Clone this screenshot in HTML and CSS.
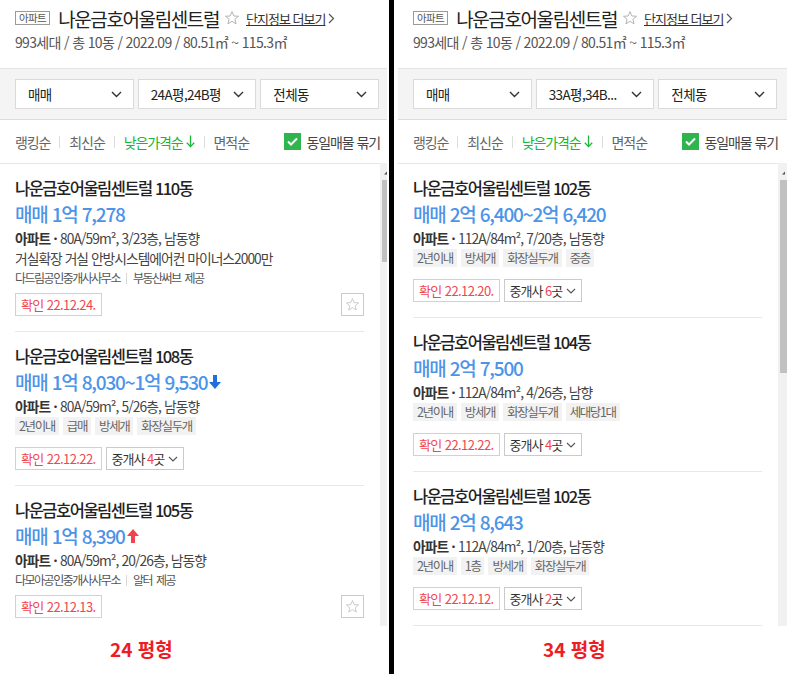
FILE: index.html
```html
<!DOCTYPE html>
<html lang="ko">
  <head>
    <meta charset="UTF-8" />
    <meta name="viewport" content="width=device-width, initial-scale=1.0" />
    <title>나운금호어울림센트럴 매물 비교</title>
    <link rel="stylesheet" href="styles.css">
  </head>

  <body>
    <div class="page">
      <div class="clip">
        <section class="panel">
          <header class="complex">
            <div class="complex-title">
              <span class="type-badge">아파트</span>
              <h1 class="complex-name">나운금호어울림센트럴</h1>
              <svg class="fav-star" width="16" height="16" viewBox="0 0 24 24"><polygon points="12,2.5 14.8,9 21.8,9.4 16.4,13.9 18.1,20.8 12,17 5.9,20.8 7.6,13.9 2.2,9.4 9.2,9" fill="none" stroke="#b5b5b5" stroke-width="1.5"/></svg>
              <a class="complex-more">단지정보 더보기<svg width="7" height="11" viewBox="0 0 7 11"><polyline points="1,1 5.5,5.5 1,10" fill="none" stroke="#555" stroke-width="1.2"/></svg></a>
            </div>
            <p class="complex-summary">993세대 / 총 10동 / 2022.09 / 80.51㎡ ~ 115.3㎡</p>
          </header>

          <div class="filters">
            <div class="select">매매<svg width="11" height="7" viewBox="0 0 11 7"><polyline points="1,1 5.5,5.5 10,1" fill="none" stroke="#333" stroke-width="1.4"/></svg></div>
            <div class="select">24A평,24B평<svg width="11" height="7" viewBox="0 0 11 7"><polyline points="1,1 5.5,5.5 10,1" fill="none" stroke="#333" stroke-width="1.4"/></svg></div>
            <div class="select">전체동<svg width="11" height="7" viewBox="0 0 11 7"><polyline points="1,1 5.5,5.5 10,1" fill="none" stroke="#333" stroke-width="1.4"/></svg></div>
          </div>

          <div class="sort-bar">
            <ul class="sort-list">
              <li>랭킹순</li>
              <li>최신순</li>
              <li class="active">낮은가격순<svg width="9" height="13" viewBox="0 0 9 13"><path d="M4.5 0.5v11M0.8 7.8l3.7 3.8 3.7-3.8" fill="none" stroke="#1db43c" stroke-width="1.3"/></svg></li>
              <li>면적순</li>
            </ul>
            <label class="group-check"><span class="checkbox"><svg width="11" height="9" viewBox="0 0 11 9"><polyline points="1,4.5 4,7.5 10,1.5" fill="none" stroke="#fff" stroke-width="2"/></svg></span>동일매물 묶기</label>
          </div>

          <div class="list-wrap">
            <div class="list">
              <article class="item">
                <h2 class="item-title">나운금호어울림센트럴 110동</h2>
                <p class="item-price">매매 1억 7,278</p>
                <p class="item-spec"><strong>아파트 · </strong>80A/59m², 3/23층, 남동향</p>
                <p class="item-desc">거실확장 거실 안방시스템에어컨 마이너스2000만</p>
                <p class="item-agent">다드림공인중개사사무소<span class="bar"></span>부동산써브 제공</p>
                <div class="badges">
                  <span class="confirm">확인 22.12.24.</span>
                  <span class="fav-btn"><svg width="15" height="15" viewBox="0 0 24 24"><polygon points="12,2.5 14.8,9 21.8,9.4 16.4,13.9 18.1,20.8 12,17 5.9,20.8 7.6,13.9 2.2,9.4 9.2,9" fill="none" stroke="#c4c4c4" stroke-width="1.4"/></svg></span>
                </div>
              </article>
              <article class="item">
                <h2 class="item-title">나운금호어울림센트럴 108동</h2>
                <p class="item-price">매매 1억 8,030~1억 9,530<svg class="trend" width="12" height="14" viewBox="0 0 12 14"><polygon points="4,0 8,0 8,7 12,7 6,14 0,7 4,7" fill="#1f6fde"/></svg></p>
                <p class="item-spec"><strong>아파트 · </strong>80A/59m², 5/26층, 남동향</p>
                <div class="tags"><span>2년이내</span><span>급매</span><span>방세개</span><span>화장실두개</span></div>
                <div class="badges">
                  <span class="confirm">확인 22.12.22.</span>
                  <span class="agents">중개사 <em>4</em>곳<svg width="10" height="6" viewBox="0 0 10 6"><polyline points="1,1 5,5 9,1" fill="none" stroke="#555" stroke-width="1.1"/></svg></span>
                </div>
              </article>
              <article class="item">
                <h2 class="item-title">나운금호어울림센트럴 105동</h2>
                <p class="item-price">매매 1억 8,390<svg class="trend" width="12" height="14" viewBox="0 0 12 14"><polygon points="4,14 8,14 8,7 12,7 6,0 0,7 4,7" fill="#f2444f"/></svg></p>
                <p class="item-spec"><strong>아파트 · </strong>80A/59m², 20/26층, 남동향</p>
                <p class="item-agent">다모아공인중개사사무소<span class="bar"></span>알터 제공</p>
                <div class="badges">
                  <span class="confirm">확인 22.12.13.</span>
                  <span class="fav-btn"><svg width="15" height="15" viewBox="0 0 24 24"><polygon points="12,2.5 14.8,9 21.8,9.4 16.4,13.9 18.1,20.8 12,17 5.9,20.8 7.6,13.9 2.2,9.4 9.2,9" fill="none" stroke="#c4c4c4" stroke-width="1.4"/></svg></span>
                </div>
              </article>
            </div>
            <div class="scrollbar">
              <span class="scroll-arrow"><svg width="9" height="17" viewBox="0 0 9 17"><polygon points="4,9.5 7,6.5 7,9.5" fill="#505050"/></svg></span>
              <span class="scroll-thumb thumb-short"></span>
            </div>
          </div>

          <p class="caption caption-left">24 평형</p>
        </section>
      </div>

      <div class="divider"></div>

      <section class="panel">
        <header class="complex">
          <div class="complex-title">
            <span class="type-badge">아파트</span>
            <h1 class="complex-name">나운금호어울림센트럴</h1>
            <svg class="fav-star" width="16" height="16" viewBox="0 0 24 24"><polygon points="12,2.5 14.8,9 21.8,9.4 16.4,13.9 18.1,20.8 12,17 5.9,20.8 7.6,13.9 2.2,9.4 9.2,9" fill="none" stroke="#b5b5b5" stroke-width="1.5"/></svg>
            <a class="complex-more">단지정보 더보기<svg width="7" height="11" viewBox="0 0 7 11"><polyline points="1,1 5.5,5.5 1,10" fill="none" stroke="#555" stroke-width="1.2"/></svg></a>
          </div>
          <p class="complex-summary">993세대 / 총 10동 / 2022.09 / 80.51㎡ ~ 115.3㎡</p>
        </header>

        <div class="filters">
          <div class="select">매매<svg width="11" height="7" viewBox="0 0 11 7"><polyline points="1,1 5.5,5.5 10,1" fill="none" stroke="#333" stroke-width="1.4"/></svg></div>
          <div class="select">33A평,34B...<svg width="11" height="7" viewBox="0 0 11 7"><polyline points="1,1 5.5,5.5 10,1" fill="none" stroke="#333" stroke-width="1.4"/></svg></div>
          <div class="select">전체동<svg width="11" height="7" viewBox="0 0 11 7"><polyline points="1,1 5.5,5.5 10,1" fill="none" stroke="#333" stroke-width="1.4"/></svg></div>
        </div>

        <div class="sort-bar">
          <ul class="sort-list">
            <li>랭킹순</li>
            <li>최신순</li>
            <li class="active">낮은가격순<svg width="9" height="13" viewBox="0 0 9 13"><path d="M4.5 0.5v11M0.8 7.8l3.7 3.8 3.7-3.8" fill="none" stroke="#1db43c" stroke-width="1.3"/></svg></li>
            <li>면적순</li>
          </ul>
          <label class="group-check"><span class="checkbox"><svg width="11" height="9" viewBox="0 0 11 9"><polyline points="1,4.5 4,7.5 10,1.5" fill="none" stroke="#fff" stroke-width="2"/></svg></span>동일매물 묶기</label>
        </div>

        <div class="list-wrap">
          <div class="list">
            <article class="item">
              <h2 class="item-title">나운금호어울림센트럴 102동</h2>
              <p class="item-price">매매 2억 6,400~2억 6,420</p>
              <p class="item-spec"><strong>아파트 · </strong>112A/84m², 7/20층, 남동향</p>
              <div class="tags"><span>2년이내</span><span>방세개</span><span>화장실두개</span><span>중층</span></div>
              <div class="badges">
                <span class="confirm">확인 22.12.20.</span>
                <span class="agents">중개사 <em>6</em>곳<svg width="10" height="6" viewBox="0 0 10 6"><polyline points="1,1 5,5 9,1" fill="none" stroke="#555" stroke-width="1.1"/></svg></span>
              </div>
            </article>
            <article class="item">
              <h2 class="item-title">나운금호어울림센트럴 104동</h2>
              <p class="item-price">매매 2억 7,500</p>
              <p class="item-spec"><strong>아파트 · </strong>112A/84m², 4/26층, 남향</p>
              <div class="tags"><span>2년이내</span><span>방세개</span><span>화장실두개</span><span>세대당1대</span></div>
              <div class="badges">
                <span class="confirm">확인 22.12.22.</span>
                <span class="agents">중개사 <em>4</em>곳<svg width="10" height="6" viewBox="0 0 10 6"><polyline points="1,1 5,5 9,1" fill="none" stroke="#555" stroke-width="1.1"/></svg></span>
              </div>
            </article>
            <article class="item">
              <h2 class="item-title">나운금호어울림센트럴 102동</h2>
              <p class="item-price">매매 2억 8,643</p>
              <p class="item-spec"><strong>아파트 · </strong>112A/84m², 1/20층, 남동향</p>
              <div class="tags"><span>2년이내</span><span>1층</span><span>방세개</span><span>화장실두개</span></div>
              <div class="badges">
                <span class="confirm">확인 22.12.12.</span>
                <span class="agents">중개사 <em>2</em>곳<svg width="10" height="6" viewBox="0 0 10 6"><polyline points="1,1 5,5 9,1" fill="none" stroke="#555" stroke-width="1.1"/></svg></span>
              </div>
            </article>
          </div>
          <div class="scrollbar">
            <span class="scroll-arrow"><svg width="9" height="17" viewBox="0 0 9 17"><polygon points="4,9.5 7,6.5 7,9.5" fill="#505050"/></svg></span>
            <span class="scroll-thumb thumb-long"></span>
          </div>
        </div>

        <p class="caption caption-right">34 평형</p>
      </section>
    </div>
  </body>
</html>
```

FILE: styles.css
```css
* {
  box-sizing: border-box;
  margin: 0;
  padding: 0;
}

body {
  width: 791px;
  height: 674px;
  overflow: hidden;
  background: #fff;
  color: #222;
  font-family: "Noto Sans CJK KR", sans-serif;
}

.page {
  display: flex;
  height: 674px;
}

.clip {
  flex: none;
  width: 387px;
  overflow: hidden;
}

.divider {
  flex: none;
  width: 5px;
  margin: 0 4px 0 2px;
  background: #000;
}

.panel {
  flex: none;
  width: 389px;
}

/* complex header */
.complex {
  height: 68px;
  padding: 6px 0 0 15px;
}

.complex-title {
  display: flex;
  align-items: center;
  height: 24px;
}

.type-badge {
  height: 14px;
  padding: 0 3px;
  border: 1px solid #9a9a9a;
  color: #555;
  font-size: 10.5px;
  line-height: 12px;
  letter-spacing: -0.6px;
}

.complex-name {
  margin-left: 8px;
  font-size: 19px;
  font-weight: 400;
  letter-spacing: -1.4px;
}

.fav-star {
  margin-left: 5px;
}

.complex-more {
  display: flex;
  align-items: center;
  gap: 3px;
  margin-left: 6px;
  color: #333;
  font-size: 13px;
  letter-spacing: -1px;
  text-decoration: underline;
}

.complex-summary {
  margin-top: 2px;
  color: #555;
  font-size: 14px;
  letter-spacing: -0.65px;
}

/* filters */
.filters {
  display: flex;
  gap: 4px;
  padding: 10px 10px 10px 15px;
  background: #f4f4f4;
  border-top: 1px solid #e4e4e4;
  border-bottom: 1px solid #dcdcdc;
}

.select {
  flex: 1;
  display: flex;
  align-items: center;
  justify-content: space-between;
  height: 30px;
  padding: 0 11px 0 12px;
  background: #fff;
  border: 1px solid #dadada;
  font-size: 13.5px;
  letter-spacing: -0.6px;
}

/* sort */
.sort-bar {
  display: flex;
  align-items: center;
  justify-content: space-between;
  height: 43px;
  padding: 0 9px 0 15px;
}

.sort-list {
  display: flex;
  align-items: center;
  list-style: none;
  color: #666;
  font-size: 14px;
  letter-spacing: -1.1px;
}

.sort-list li {
  display: flex;
  align-items: center;
}

.sort-list li + li::before {
  content: "";
  width: 1px;
  height: 12px;
  margin: 0 9px;
  background: #dcdcdc;
}

.sort-list .active {
  color: #17b636;
}

.sort-list .active svg {
  margin-left: 3px;
}

.group-check {
  display: flex;
  align-items: center;
  gap: 6px;
  color: #444;
  font-size: 14px;
  letter-spacing: -1.1px;
}

.checkbox {
  display: flex;
  align-items: center;
  justify-content: center;
  width: 17px;
  height: 17px;
  background: #2fb54d;
}

/* list */
.list-wrap {
  display: flex;
  height: 463px;
}

.list {
  flex: 1;
  overflow: hidden;
  border-top: 1px solid #e6e6e6;
}

.scrollbar {
  display: flex;
  flex-direction: column;
  width: 9px;
  background: #f1f1f1;
}

.scroll-arrow {
  height: 17px;
}

.scroll-thumb {
  margin-left: 2px;
  background: #c1c1c1;
}

.thumb-short {
  height: 82px;
}

.thumb-long {
  height: 193px;
}

.item {
  margin: 0 16px 0 15px;
  padding: 13px 0 15px;
  border-bottom: 1px solid #e8e8e8;
}

.item-title {
  font-size: 16.5px;
  font-weight: 500;
  line-height: 22px;
  letter-spacing: -1.5px;
}

.item-price {
  display: flex;
  align-items: center;
  margin-top: 2px;
  color: #4c94e8;
  font-size: 19px;
  font-weight: 500;
  line-height: 26px;
  letter-spacing: -1.2px;
}

.trend {
  margin-left: 2px;
}

.item-spec {
  margin-top: 1px;
  color: #444;
  font-size: 13.8px;
  line-height: 20px;
  letter-spacing: -0.9px;
}

.item-spec strong {
  color: #333;
  font-weight: 700;
}

.item-desc {
  color: #444;
  font-size: 13.8px;
  line-height: 20px;
  letter-spacing: -1px;
}

.item-agent {
  display: flex;
  align-items: center;
  color: #555;
  font-size: 12px;
  line-height: 20px;
  letter-spacing: -1.5px;
  word-spacing: 2px;
}

.item-agent .bar {
  width: 1px;
  height: 11px;
  margin: 0 6px;
  background: #d6d6d6;
}

.tags {
  display: flex;
  gap: 4px;
  margin-top: 1px;
}

.tags span {
  height: 18px;
  padding: 0 4px;
  background: #f2f2f2;
  color: #666;
  font-size: 12.5px;
  line-height: 18px;
  letter-spacing: -1.4px;
}

.badges {
  display: flex;
  align-items: center;
  gap: 4px;
  margin-top: 12px;
}

.item-agent + .badges {
  margin-top: 5px;
}

.confirm {
  height: 23px;
  padding: 0 5px;
  border: 1px solid #ffbcc1;
  color: #f2464f;
  font-size: 13px;
  line-height: 21px;
  letter-spacing: -0.6px;
}

.agents {
  display: flex;
  align-items: center;
  height: 23px;
  padding: 0 5px;
  border: 1px solid #cacaca;
  color: #333;
  font-size: 13px;
  line-height: 21px;
  letter-spacing: -1px;
  white-space: pre;
}

.agents em {
  color: #f2464f;
  font-style: normal;
}

.agents svg {
  margin-left: 4px;
}

.fav-btn {
  display: flex;
  align-items: center;
  justify-content: center;
  width: 23px;
  height: 23px;
  margin-left: auto;
  border: 1px solid #cacaca;
}

.caption {
  padding-top: 10px;
  color: #ee1c25;
  font-size: 19px;
  font-weight: 700;
  line-height: 26px;
}

.caption-left {
  padding-left: 110px;
}

.caption-right {
  padding-left: 145px;
}
```
